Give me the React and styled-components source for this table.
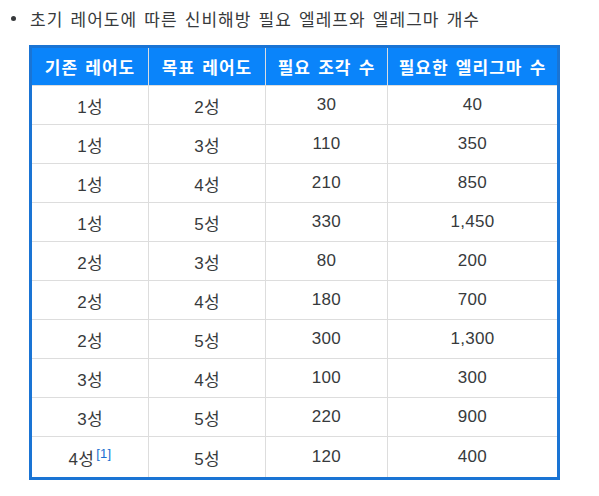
import React from 'react';
import styled, { createGlobalStyle } from 'styled-components';

const GlobalStyle = createGlobalStyle`
  body {
    margin: 0;
    background: #ffffff;
    font-family: "Liberation Sans", "Noto Sans CJK KR", sans-serif;
    color: #373a3c;
  }
`;

const Page = styled.div`
  width: 599px;
  height: 496px;
  padding-top: 4px;
  box-sizing: border-box;
`;

const TitleRow = styled.div`
  display: flex;
  align-items: center;
  height: 28px;
  padding-left: 11px;
  font-size: 17px;
  letter-spacing: 1px;
  word-spacing: 1.5px;
`;

const Bullet = styled.span`
  width: 5px;
  height: 5px;
  border-radius: 50%;
  background: #373a3c;
  margin-right: 14px;
  flex-shrink: 0;
`;

const Table = styled.table`
  margin: 13px 0 0 29px;
  width: 531px;
  border-collapse: collapse;
  border: 3px solid #1a74d4;
  font-size: 17px;
  word-spacing: 1.5px;
  table-layout: fixed;
`;

const HeadCell = styled.th`
  background: #0a84fa;
  color: #ffffff;
  font-weight: 700;
  letter-spacing: 1px;
  height: 37px;
  padding: 0;
  text-align: center;
  border: 1px solid #d9dde2;
  border-top: none;
  border-bottom: none;
  &:first-child { border-left: none; }
  &:last-child { border-right: none; }
`;

const Cell = styled.td`
  height: ${p => (p.$tall ? 40 : 38)}px;
  padding: 0;
  text-align: center;
  letter-spacing: 0.3px;
  border: 1px solid #dddddd;
`;

const Note = styled.sup`
  color: #1a6fd0;
  font-size: 13px;
  margin-left: 2px;
`;

const rows = [
  ['1성', '2성', '30', '40'],
  ['1성', '3성', '110', '350'],
  ['1성', '4성', '210', '850'],
  ['1성', '5성', '330', '1,450'],
  ['2성', '3성', '80', '200'],
  ['2성', '4성', '180', '700'],
  ['2성', '5성', '300', '1,300'],
  ['3성', '4성', '100', '300'],
  ['3성', '5성', '220', '900'],
];

export default function App() {
  return (
    <Page>
      <GlobalStyle />
      <TitleRow>
        <Bullet />
        초기 레어도에 따른 신비해방 필요 엘레프와 엘레그마 개수
      </TitleRow>
      <Table>
        <colgroup>
          <col style={{ width: 118 }} />
          <col style={{ width: 117 }} />
          <col style={{ width: 122 }} />
          <col />
        </colgroup>
        <thead>
          <tr>
            <HeadCell>기존 레어도</HeadCell>
            <HeadCell>목표 레어도</HeadCell>
            <HeadCell>필요 조각 수</HeadCell>
            <HeadCell>필요한 엘리그마 수</HeadCell>
          </tr>
        </thead>
        <tbody>
          {rows.map((r, i) => (
            <tr key={i}>
              {r.map((c, j) => (
                <Cell key={j}>{c}</Cell>
              ))}
            </tr>
          ))}
          <tr>
            <Cell $tall>4성<Note>[1]</Note></Cell>
            <Cell $tall>5성</Cell>
            <Cell $tall>120</Cell>
            <Cell $tall>400</Cell>
          </tr>
        </tbody>
      </Table>
    </Page>
  );
}
